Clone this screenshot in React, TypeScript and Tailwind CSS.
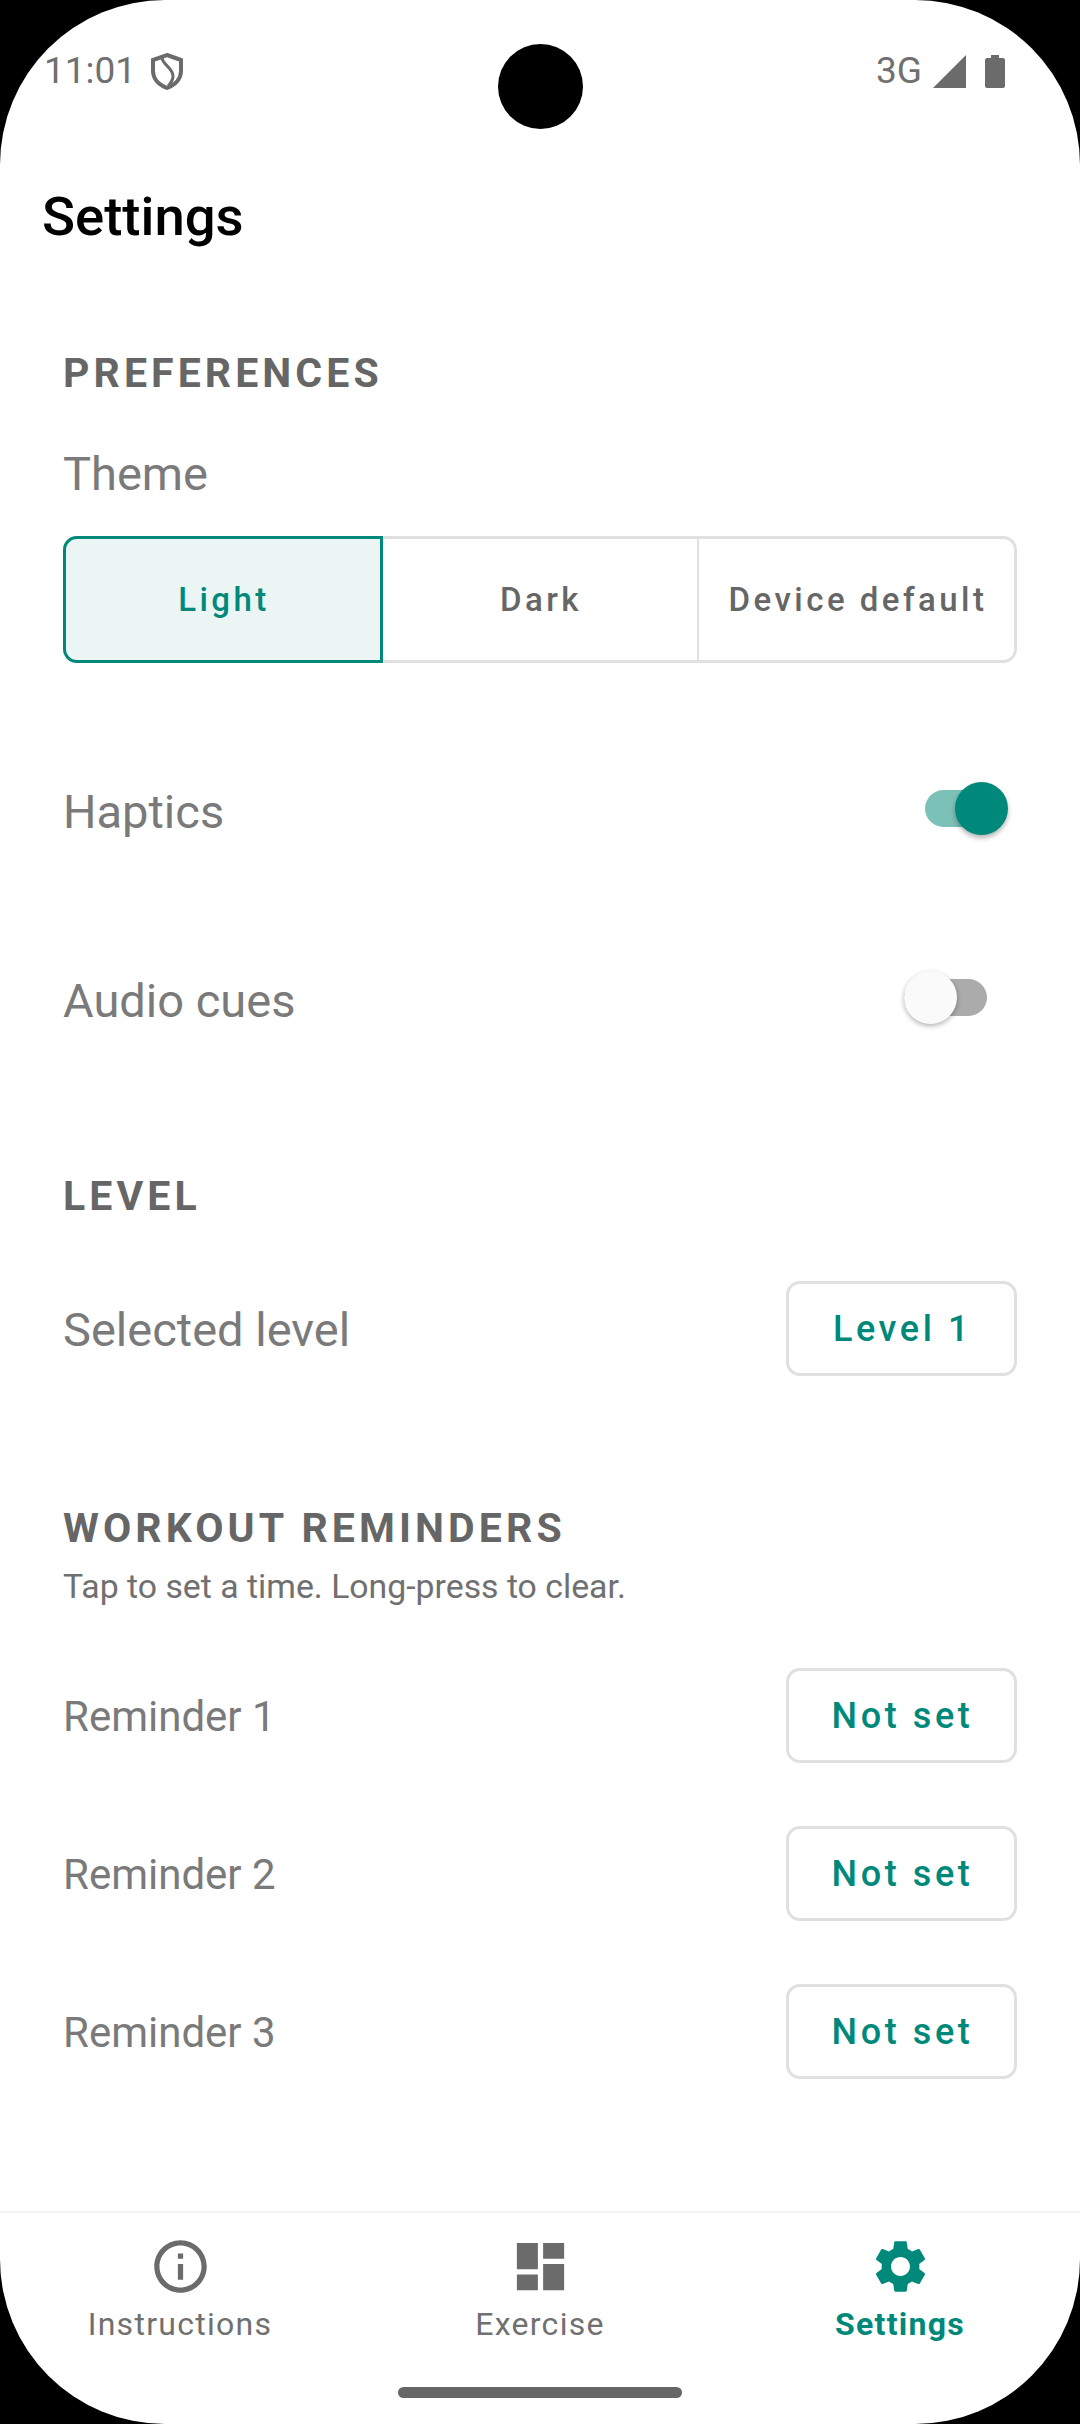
import type { ReactNode } from "react";

const font = { roboto: "font-['Roboto',sans-serif]" };

function SectionTitle({ children }: { children: ReactNode }) {
  return <h2 className="text-[41px] leading-[50px] font-bold tracking-[0.1em] text-[#666666]">{children}</h2>;
}

function OutlineButton({ label }: { label: string }) {
  return (
    <button className="w-[231px] h-[95px] pl-[2px] flex items-center justify-center rounded-[14px] border-[3px] border-[#e0e0e0] bg-white text-[36px] font-medium tracking-[0.1em] text-[#00897b]">
      {label}
    </button>
  );
}

function Toggle({ on }: { on: boolean }) {
  if (on) {
    return (
      <div className="relative w-[81px] h-[37px] rounded-full bg-[#7cc1b8] mr-[11px] mb-[7px]">
        <div className="absolute right-[-2px] top-[-8px] w-[53px] h-[53px] rounded-full bg-[#00897b] shadow-[0_3px_5px_rgba(0,0,0,0.3)]" />
      </div>
    );
  }
  return (
    <div className="relative w-[83px] h-[37px] rounded-full bg-[#ababab] mr-[30px] mb-[7px]">
      <div className="absolute left-0 top-[-8px] w-[53px] h-[53px] rounded-full bg-[#fafafa] shadow-[0_2px_5px_rgba(0,0,0,0.3)]" />
    </div>
  );
}

function NavItem({ label, active, path }: { label: string; active?: boolean; path: string }) {
  return (
    <div className="flex-1 flex flex-col items-center">
      <svg width="63" height="63" viewBox="0 0 24 24" fill={active ? "#00897b" : "#6b6b6b"}>
        <path d={path} />
      </svg>
      <span className={`mt-[6px] text-[32px] leading-[40px] tracking-[0.04em] ${active ? "font-bold text-[#00897b]" : "text-[#707070]"}`}>
        {label}
      </span>
    </div>
  );
}

export default function App() {
  return (
    <div className={`w-[1080px] h-[2424px] bg-black ${font.roboto}`}>
      <div className="relative w-full h-full bg-white rounded-[165px] overflow-hidden flex flex-col">
        {/* punch hole */}
        <div className="absolute left-[498px] top-[44px] w-[85px] h-[85px] rounded-full bg-black" />

        {/* status bar */}
        <div className="h-[70px] mt-[36px] pl-[44px] pr-[75px] flex items-center justify-between text-[37px] text-[#707070]">
          <div className="flex items-center gap-[13px]">
            <span>11:01</span>
            <svg width="36" height="38" viewBox="0 0 36 38" fill="none" stroke="#6b6b6b" strokeWidth="4">
              <path d="M18 3 L32 8 V19 C32 27 26 33 18 36 C10 33 4 27 4 19 V8 Z" />
              <path d="M13 6 C14 13 24 16 24 24 C24 28 22 31 19 34" strokeWidth="3" />
            </svg>
          </div>
          <div className="flex items-center">
            <span className="mr-[11px]">3G</span>
            <svg width="33" height="33" viewBox="0 0 33 33" fill="#6b6b6b" className="mr-[19px]">
              <path d="M33 0 V33 H0 Z" />
            </svg>
            <svg width="20" height="33" viewBox="0 0 20 33" fill="#6b6b6b">
              <path d="M6 0 H14 V3 H18 C19 3 20 4 20 5 V31 C20 32 19 33 18 33 H2 C1 33 0 32 0 31 V5 C0 4 1 3 2 3 H6 Z" />
            </svg>
          </div>
        </div>

        {/* title */}
        <h1 className="pl-[42px] mt-[76px] text-[54.5px] leading-[68px] font-medium text-black">Settings</h1>

        <main className="flex-1 px-[63px]">
          <section className="mt-[98px]">
            <SectionTitle>PREFERENCES</SectionTitle>
            <p className="mt-[48px] text-[47px] leading-[56px] text-[#7a7a7a]">Theme</p>
            <div className="mt-[34px] h-[127px] flex rounded-[14px] border-[3px] border-[#e0e0e0] text-[33px] font-medium tracking-[0.105em] text-[#666666]">
              <div className="w-[320px] -m-[3px] pl-[2px] flex items-center justify-center rounded-l-[14px] border-[3px] border-[#00897b] bg-[#ebf5f3] text-[#00897b]">
                Light
              </div>
              <div className="flex-1 ml-[3px] pl-[2px] flex items-center justify-center border-r-[2px] border-[#e0e0e0]">Dark</div>
              <div className="w-[315px] pl-[3px] flex items-center justify-center">Device default</div>
            </div>
          </section>

          <div className="mt-[121px] h-[56px] flex items-center justify-between">
            <span className="text-[47px] text-[#7a7a7a]">Haptics</span>
            <Toggle on />
          </div>
          <div className="mt-[133px] h-[56px] flex items-center justify-between">
            <span className="text-[47px] text-[#7a7a7a]">Audio cues</span>
            <Toggle on={false} />
          </div>

          <section className="mt-[142px]">
            <SectionTitle>LEVEL</SectionTitle>
            <div className="mt-[60px] flex items-center justify-between">
              <span className="pt-[4px] text-[47px] text-[#7a7a7a]">Selected level</span>
              <OutlineButton label="Level 1" />
            </div>
          </section>

          <section className="mt-[127px]">
            <SectionTitle>WORKOUT REMINDERS</SectionTitle>
            <p className="mt-[12px] text-[33.8px] leading-[44px] text-[#707070]">Tap to set a time. Long-press to clear.</p>
            <div className="mt-[59px] flex flex-col gap-[63px]">
              {["Reminder 1", "Reminder 2", "Reminder 3"].map((name) => (
                <div key={name} className="flex items-center justify-between">
                  <span className="pt-[2px] text-[42px] text-[#7a7a7a]">{name}</span>
                  <OutlineButton label="Not set" />
                </div>
              ))}
            </div>
          </section>
        </main>

        {/* bottom nav */}
        <nav className="h-[213px] border-t-[2px] border-[#f3f3f3] pt-[22px] flex">
          <NavItem label="Instructions" path="M11 7h2v2h-2zm0 4h2v6h-2zm1-9C6.48 2 2 6.48 2 12s4.48 10 10 10 10-4.48 10-10S17.52 2 12 2zm0 18c-4.41 0-8-3.59-8-8s3.59-8 8-8 8 3.59 8 8-3.59 8-8 8z" />
          <NavItem label="Exercise" path="M3 13h8V3H3v10zm0 8h8v-6H3v6zm10 0h8V11h-8v10zm0-18v6h8V3h-8z" />
          <NavItem
            label="Settings"
            active
            path="M19.14 12.94c.04-.3.06-.61.06-.94 0-.32-.02-.64-.07-.94l2.03-1.58c.18-.14.23-.41.12-.61l-1.92-3.32c-.12-.22-.37-.29-.59-.22l-2.39.96c-.5-.38-1.03-.7-1.62-.94l-.36-2.54c-.04-.24-.24-.41-.48-.41h-3.84c-.24 0-.43.17-.47.41l-.36 2.54c-.59.24-1.13.57-1.62.94l-2.39-.96c-.22-.08-.47 0-.59.22L2.74 8.87c-.12.21-.08.47.12.61l2.03 1.58c-.05.3-.09.63-.09.94s.02.64.07.94l-2.03 1.58c-.18.14-.23.41-.12.61l1.92 3.32c.12.22.37.29.59.22l2.39-.96c.5.38 1.03.7 1.62.94l.36 2.54c.05.24.24.41.48.41h3.84c.24 0 .44-.17.47-.41l.36-2.54c.59-.24 1.13-.56 1.62-.94l2.39.96c.22.08.47 0 .59-.22l1.92-3.32c.12-.22.07-.47-.12-.61l-2.01-1.58zM12 15.6c-1.98 0-3.6-1.62-3.6-3.6s1.62-3.6 3.6-3.6 3.6 1.62 3.6 3.6-1.62 3.6-3.6 3.6z"
          />
        </nav>
        {/* gesture pill */}
        <div className="absolute left-[398px] top-[2387px] w-[284px] h-[11px] rounded-full bg-[#666666]" />
      </div>
    </div>
  );
}
